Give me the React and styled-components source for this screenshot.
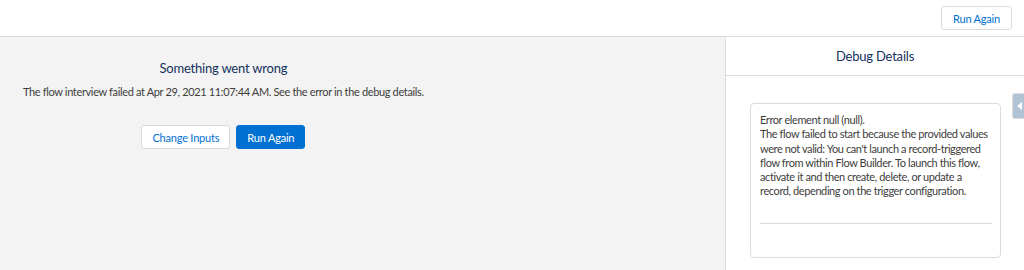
import React from 'react';
import styled, { createGlobalStyle } from 'styled-components';

const GlobalStyle = createGlobalStyle`
  html, body {
    margin: 0;
    padding: 0;
    background: #ffffff;
  }
  body {
    font-family: 'Lato', 'Open Sans', sans-serif;
    color: #3e3e3c;
  }
`;

const Page = styled.div`
  width: 1024px;
  height: 270px;
  display: flex;
  flex-direction: column;
  overflow: hidden;
`;

const Header = styled.header`
  height: 37px;
  flex: 0 0 37px;
  border-bottom: 1px solid #dddbda;
  display: flex;
  align-items: center;
  justify-content: flex-end;
  padding-right: 12px;
  box-sizing: border-box;
`;

const Button = styled.button`
  font-family: inherit;
  font-size: 11px;
  letter-spacing: -0.2px;
  height: 24px;
  padding: 0 ${(p) => (p.$tight ? 10 : 11)}px;
  border-radius: 3px;
  border: 1px solid ${(p) => (p.$brand ? '#0070d2' : '#dddbda')};
  background: ${(p) => (p.$brand ? '#0070d2' : '#ffffff')};
  color: ${(p) => (p.$brand ? '#ffffff' : '#0070d2')};
  cursor: pointer;
`;

const Body = styled.div`
  flex: 1;
  display: flex;
`;

const Main = styled.main`
  width: 726px;
  background: #f3f3f3;
  border-right: 1px solid #dddbda;
  padding: 20px 0 0 23px;
  box-sizing: border-box;
`;

const Message = styled.div`
  display: inline-flex;
  flex-direction: column;
  align-items: center;
`;

const Title = styled.h2`
  margin: 0;
  font-size: 13px;
  letter-spacing: -0.2px;
  font-weight: 400;
  color: #16325c;
  line-height: 20px;
`;

const Detail = styled.p`
  margin: 6px 0 0;
  font-size: 11px;
  letter-spacing: -0.35px;
  color: #3e3e3c;
  line-height: 16px;
`;

const Actions = styled.div`
  display: flex;
  gap: 6px;
  margin-top: 25px;
`;

const Side = styled.aside`
  flex: 1;
  display: flex;
  flex-direction: column;
  position: relative;
`;

const SideTitle = styled.div`
  height: 38px;
  border-bottom: 1px solid #dddbda;
  display: flex;
  align-items: center;
  justify-content: center;
  font-size: 13px;
  letter-spacing: -0.2px;
  color: #16325c;
`;

const SideBody = styled.div`
  padding: 27px 23px 0 24px;
`;

const Card = styled.div`
  border: 1px solid #dddbda;
  border-radius: 4px;
  height: 155px;
  box-sizing: border-box;
  padding: 9px 8px 0 9px;
`;

const CardText = styled.p`
  margin: 0;
  font-size: 11px;
  letter-spacing: -0.4px;
  line-height: 14.3px;
  color: #3e3e3c;
`;

const Rule = styled.hr`
  border: none;
  border-top: 1px solid #dddbda;
  margin: 24px 0 0;
`;

const Tab = styled.div`
  position: absolute;
  right: -4px;
  top: 56px;
  width: 14px;
  height: 24px;
  border-radius: 3px 0 0 3px;
  background: #b0c4d6;
  border: 1px solid #dddbda;
  display: flex;
  align-items: center;
  justify-content: center;
`;

export default function App() {
  return (
    <Page>
      <GlobalStyle />
      <Header>
        <Button type="button">Run Again</Button>
      </Header>
      <Body>
        <Main>
          <Message>
            <Title>Something went wrong</Title>
            <Detail>
              The flow interview failed at Apr 29, 2021 11:07:44 AM. See the error in the debug details.
            </Detail>
            <Actions>
              <Button type="button" $tight>Change Inputs</Button>
              <Button type="button" $tight $brand>Run Again</Button>
            </Actions>
          </Message>
        </Main>
        <Side>
          <SideTitle>Debug Details</SideTitle>
          <SideBody>
            <Card>
              <CardText>
                Error element null (null).
                <br />
                The flow failed to start because the provided values were not valid: You can't launch a record-triggered flow from within Flow Builder. To launch this flow, activate it and then create, delete, or update a record, depending on the trigger configuration.
              </CardText>
              <Rule />
            </Card>
          </SideBody>
          <Tab>
            <svg width="6" height="8" viewBox="0 0 6 8">
              <path d="M5 0 L0 4 L5 8 Z" fill="#ffffff" />
            </svg>
          </Tab>
        </Side>
      </Body>
    </Page>
  );
}
